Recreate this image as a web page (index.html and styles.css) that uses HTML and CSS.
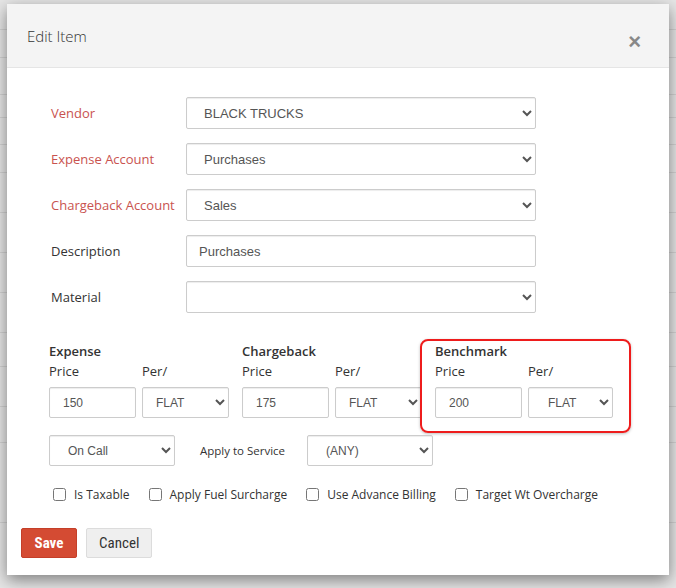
FILE: index.html
```
<!DOCTYPE html>
<html lang="en">
<head>
    <meta charset="UTF-8">
    <title>Edit Item</title>
    <link rel="stylesheet" href="styles.css">
</head>
<body>
    <!-- page behind the dialog -->
    <div class="backdrop">
        <div class="bg-row" style="height: 30px"></div>
        <div class="bg-row" style="height: 28px"></div>
        <div class="bg-row" style="height: 37px"></div>
        <div class="bg-row" style="height: 23px"></div>
        <div class="bg-row" style="height: 27px"></div>
        <div class="bg-row" style="height: 28px"></div>
        <div class="bg-row" style="height: 40px"></div>
        <div class="bg-row" style="height: 40px"></div>
        <div class="bg-row" style="height: 40px"></div>
        <div class="bg-row" style="height: 40px"></div>
        <div class="bg-row" style="height: 34px"></div>
        <div class="bg-row" style="height: 40px"></div>
        <div class="bg-row" style="height: 36px"></div>
        <div class="bg-row" style="height: 80px"></div>
    </div>

    <div class="modal">
        <div class="modal-header">
            <h4 class="modal-title">Edit Item</h4>
            <button class="close">&times;</button>
        </div>
        <div class="modal-body">
            <div class="form-row">
                <label class="req">Vendor</label>
                <select class="form-control"><option>BLACK TRUCKS</option></select>
            </div>
            <div class="form-row">
                <label class="req">Expense Account</label>
                <select class="form-control"><option>Purchases</option></select>
            </div>
            <div class="form-row">
                <label class="req">Chargeback Account</label>
                <select class="form-control"><option>Sales</option></select>
            </div>
            <div class="form-row">
                <label>Description</label>
                <input class="form-control text" type="text" value="Purchases">
            </div>
            <div class="form-row">
                <label>Material</label>
                <select class="form-control"><option></option></select>
            </div>

            <div class="price-groups">
                <div class="price-group">
                    <div class="group-title">Expense</div>
                    <div class="price-grid">
                        <span>Price</span>
                        <span>Per/</span>
                        <input class="small-control" type="text" value="150">
                        <select class="small-control"><option>FLAT</option></select>
                    </div>
                </div>
                <div class="price-group">
                    <div class="group-title">Chargeback</div>
                    <div class="price-grid">
                        <span>Price</span>
                        <span>Per/</span>
                        <input class="small-control" type="text" value="175">
                        <select class="small-control"><option>FLAT</option></select>
                    </div>
                </div>
                <div class="price-group highlight">
                    <div class="group-title">Benchmark</div>
                    <div class="price-grid narrow">
                        <span>Price</span>
                        <span>Per/</span>
                        <input class="small-control" type="text" value="200">
                        <select class="small-control centered"><option>FLAT</option></select>
                    </div>
                </div>
            </div>

            <div class="service-row">
                <select class="small-control wide-select"><option>On Call</option></select>
                <span class="service-label">Apply to Service</span>
                <select class="small-control wide-select any"><option>(ANY)</option></select>
            </div>

            <div class="checks">
                <label class="check"><input type="checkbox"> Is Taxable</label>
                <label class="check"><input type="checkbox"> Apply Fuel Surcharge</label>
                <label class="check"><input type="checkbox"> Use Advance Billing</label>
                <label class="check"><input type="checkbox"> Target Wt Overcharge</label>
            </div>
        </div>
        <div class="modal-footer">
            <button class="btn btn-save">Save</button>
            <button class="btn btn-cancel">Cancel</button>
        </div>
    </div>
</body>
</html>
```

FILE: styles.css
```
body {
    margin: 0;
    padding: 0;
    background-color: #e6e6e6;
    font-family: "Open Sans", Arial, sans-serif;
    color: #333;
    overflow: hidden;
}
.backdrop {
    height: 588px;
}
.bg-row {
    border-bottom: 1px solid #d2d2d2;
    box-sizing: border-box;
}

/* Dialog */
.modal {
    position: absolute;
    top: 4px;
    left: 7px;
    width: 662px;
    height: 571px;
    background: white;
    box-shadow: 0 5px 15px rgba(0, 0, 0, 0.45);
    display: flex;
    flex-direction: column;
}
.modal-header {
    height: 64px;
    box-sizing: border-box;
    background-color: #f4f4f4;
    border-bottom: 1px solid #e5e5e5;
    display: flex;
    align-items: flex-start;
    justify-content: space-between;
    padding: 0 28px 0 20px;
}
.modal-title {
    margin: 22px 0 0;
    font-size: 15px;
    font-weight: 300;
    color: #333;
}
.close {
    margin-top: 27px;
    padding: 0;
    border: none;
    background: none;
    font-family: Arial, sans-serif;
    font-size: 22px;
    font-weight: bold;
    line-height: 1;
    color: #888;
}
.modal-body {
    padding: 29px 42px 0;
}

/* Top form rows */
.form-row {
    display: flex;
    align-items: center;
    height: 32px;
    margin-bottom: 14px;
}
.form-row label {
    width: 135px;
    padding-left: 2px;
    font-size: 13px;
    color: #333;
}
.form-row label.req {
    color: #c9534f;
}
.form-control {
    width: 350px;
    height: 32px;
    box-sizing: border-box;
    border: 1px solid #ccc;
    border-radius: 2px;
    background-color: white;
    box-shadow: inset 0 1px 1px rgba(0, 0, 0, 0.075);
    font-family: "Liberation Sans", Arial, sans-serif;
    font-size: 13px;
    color: #555;
    padding: 0 6px 0 13px;
}
.form-control.text {
    padding-left: 12px;
}

/* Price sections */
.price-groups {
    display: flex;
    gap: 9px;
    margin: 26px 0 0 -2px;
}
.price-group {
    border: 2px solid transparent;
    padding: 1px 0 13px;
    border-radius: 8px;
}
.price-group.highlight {
    border-color: #ee1c1c;
    margin-left: -13px;
    padding-left: 13px;
    padding-right: 16px;
    box-shadow: 0 1px 3px rgba(0, 0, 0, 0.25);
}
.group-title {
    font-size: 13px;
    font-weight: 600;
    line-height: 18px;
}
.price-grid {
    display: grid;
    grid-template-columns: 87px 87px;
    column-gap: 6px;
    font-size: 13px;
}
.price-grid.narrow {
    grid-template-columns: 87px 85px;
}
.price-grid span {
    line-height: 19px;
    margin: 2px 0 6px;
}
.small-control {
    height: 31px;
    box-sizing: border-box;
    border: 1px solid #ccc;
    border-radius: 2px;
    background-color: white;
    box-shadow: inset 0 1px 1px rgba(0, 0, 0, 0.075);
    font-family: "Liberation Sans", Arial, sans-serif;
    font-size: 12px;
    color: #555;
    padding: 0 4px 0 13px;
    width: 100%;
}
select.small-control {
    padding-left: 9px;
}
select.small-control.centered {
    padding-left: 15px;
}

.service-row {
    display: flex;
    align-items: center;
    margin-top: 2px;
}
.wide-select {
    width: 126px;
}
select.wide-select {
    padding-left: 14px;
}
.service-label {
    font-size: 11.5px;
    margin: 0 22px 0 25px;
}

.checks {
    display: flex;
    align-items: center;
    margin-top: 18px;
    padding-left: 4px;
    height: 20px;
}
.check {
    display: flex;
    align-items: center;
    font-size: 12px;
    color: #333;
    margin-right: 19px;
}
.check input {
    width: 13px;
    height: 13px;
    margin: 0 8px 0 0;
}

/* Footer buttons */
.modal-footer {
    display: flex;
    gap: 9px;
    padding: 24px 14px 0;
}
.btn {
    height: 30px;
    box-sizing: border-box;
    padding: 0 12px;
    border-radius: 2px;
    font-family: "Liberation Sans Narrow", "Roboto Condensed", Arial, sans-serif;
    font-size: 15px;
}
.btn-save {
    width: 56px;
    background-color: #d44b33;
    border: 1px solid #c43f29;
    color: white;
    font-weight: bold;
}
.btn-cancel {
    width: 66px;
    background-color: #efefef;
    border: 1px solid #dcdcdc;
    color: #333;
}
```
